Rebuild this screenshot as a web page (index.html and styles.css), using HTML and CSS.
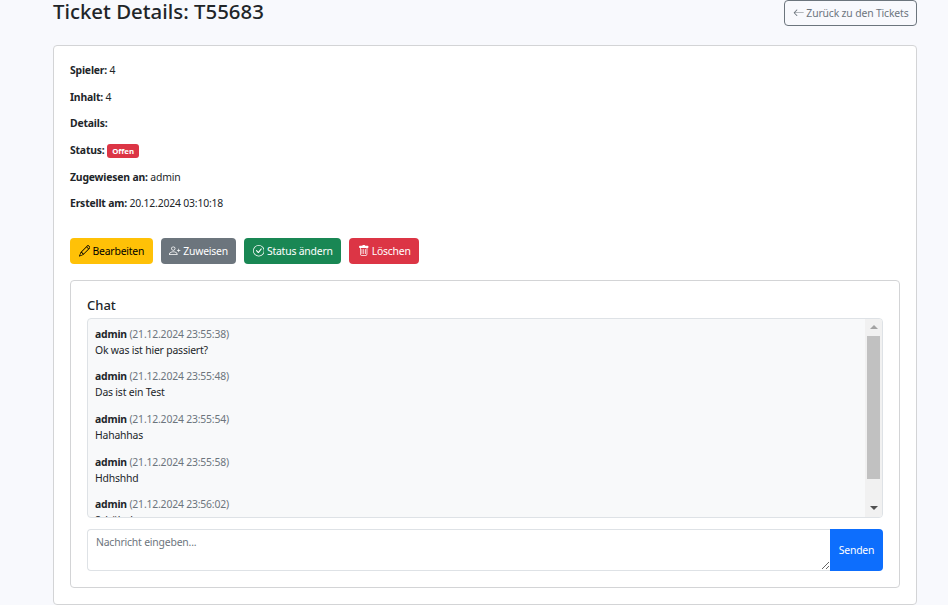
FILE: index.html
```html
<!DOCTYPE html>
<html lang="de">
<head>
<meta charset="utf-8">
<title>Ticket Details</title>
<link rel="stylesheet" href="styles.css">
</head>
<body>
<main class="page">
  <header class="head">
    <h1 class="title">Ticket Details: T55683</h1>
    <a class="back" href="#"><svg class="icon" viewBox="0 0 16 16"><path d="M15 8a.5.5 0 0 0-.5-.5H2.707l3.147-3.146a.5.5 0 1 0-.708-.708l-4 4a.5.5 0 0 0 0 .708l4 4a.5.5 0 0 0 .708-.708L2.707 8.5H14.5A.5.5 0 0 0 15 8z"/></svg> Zurück zu den Tickets</a>
  </header>
  <section class="card">
    <p class="row"><b>Spieler:</b> 4</p>
    <p class="row"><b>Inhalt:</b> 4</p>
    <p class="row"><b>Details:</b></p>
    <p class="row"><b>Status:</b> <span class="badge">Offen</span></p>
    <p class="row"><b>Zugewiesen an:</b> admin</p>
    <p class="row"><b>Erstellt am:</b> 20.12.2024 03:10:18</p>
    <div class="actions">
      <button class="btn warn"><svg class="icon" viewBox="0 0 16 16"><path d="M12.146.146a.5.5 0 0 1 .708 0l3 3a.5.5 0 0 1 0 .708l-10 10a.5.5 0 0 1-.168.11l-5 2a.5.5 0 0 1-.65-.65l2-5a.5.5 0 0 1 .11-.168l10-10zM11.207 2.5 13.5 4.793 14.793 3.5 12.5 1.207 11.207 2.5zm1.586 3L10.5 3.207 4 9.707V10h.5a.5.5 0 0 1 .5.5v.5h.5a.5.5 0 0 1 .5.5v.5h.293l6.5-6.5zm-9.761 5.175-.106.106-1.528 3.821 3.821-1.528.106-.106A.5.5 0 0 1 5 12.5V12h-.5a.5.5 0 0 1-.5-.5V11h-.5a.5.5 0 0 1-.468-.325z"/></svg> Bearbeiten</button>
      <button class="btn grey"><svg class="icon" viewBox="0 0 16 16"><path d="M6 8a3 3 0 1 0 0-6 3 3 0 0 0 0 6zm2-3a2 2 0 1 1-4 0 2 2 0 0 1 4 0zm4 8c0 1-1 1-1 1H1s-1 0-1-1 1-4 6-4 6 3 6 4zm-1-.004c-.001-.246-.154-.986-.832-1.664C9.516 10.68 8.289 10 6 10c-2.29 0-3.516.68-4.168 1.332-.678.678-.83 1.418-.832 1.664h10z"/><path d="M13.5 5a.5.5 0 0 1 .5.5V7h1.5a.5.5 0 0 1 0 1H14v1.5a.5.5 0 0 1-1 0V8h-1.5a.5.5 0 0 1 0-1H13V5.5a.5.5 0 0 1 .5-.5z"/></svg> Zuweisen</button>
      <button class="btn green"><svg class="icon" viewBox="0 0 16 16"><path d="M8 15A7 7 0 1 1 8 1a7 7 0 0 1 0 14zm0 1A8 8 0 1 0 8 0a8 8 0 0 0 0 16z"/><path d="M10.97 4.97a.235.235 0 0 0-.02.022L7.477 9.417 5.384 7.323a.75.75 0 0 0-1.06 1.06L6.97 11.03a.75.75 0 0 0 1.079-.02l3.992-4.99a.75.75 0 0 0-1.071-1.05z"/></svg> Status ändern</button>
      <button class="btn red"><svg class="icon" viewBox="0 0 16 16"><path d="M5.5 5.5A.5.5 0 0 1 6 6v6a.5.5 0 0 1-1 0V6a.5.5 0 0 1 .5-.5zm2.5 0a.5.5 0 0 1 .5.5v6a.5.5 0 0 1-1 0V6a.5.5 0 0 1 .5-.5zm3 .5a.5.5 0 0 0-1 0v6a.5.5 0 0 0 1 0V6z"/><path d="M14.5 3a1 1 0 0 1-1 1H13v9a2 2 0 0 1-2 2H5a2 2 0 0 1-2-2V4h-.5a1 1 0 0 1-1-1V2a1 1 0 0 1 1-1H6a1 1 0 0 1 1-1h2a1 1 0 0 1 1 1h3.5a1 1 0 0 1 1 1v1zM4.118 4 4 4.059V13a1 1 0 0 0 1 1h6a1 1 0 0 0 1-1V4.059L11.882 4H4.118zM2.5 3V2h11v1h-11z"/></svg> Löschen</button>
    </div>
    <section class="chat">
      <h2 class="chat-title">Chat</h2>
      <div class="log">
        <div class="messages">
          <div class="msg"><b>admin</b> <span class="time">(21.12.2024 23:55:38)</span><br>Ok was ist hier passiert?</div>
          <div class="msg"><b>admin</b> <span class="time">(21.12.2024 23:55:48)</span><br>Das ist ein Test</div>
          <div class="msg"><b>admin</b> <span class="time">(21.12.2024 23:55:54)</span><br>Hahahhas</div>
          <div class="msg"><b>admin</b> <span class="time">(21.12.2024 23:55:58)</span><br>Hdhshhd</div>
          <div class="msg"><b>admin</b> <span class="time">(21.12.2024 23:56:02)</span><br>Schöhnhs</div>
        </div>
        <div class="scrollbar">
          <span class="arrow-btn"><span class="arrow-up"></span></span>
          <span class="thumb"></span>
          <span class="arrow-btn"><span class="arrow-down"></span></span>
        </div>
      </div>
      <form class="send">
        <textarea class="input" placeholder="Nachricht eingeben..."></textarea>
        <button class="submit" type="button">Senden</button>
      </form>
    </section>
  </section>
</main>
</body>
</html>
```
FILE: styles.css
```css
* { box-sizing: border-box; }
html { background: #fff; height: 100%; overflow: hidden; }
body {
  margin: 0;
  height: 605px;
  overflow: hidden;
  background: #f8f9fd;
  color: #212529;
  font-family: "Noto Sans", "Open Sans", sans-serif;
  font-size: 10.4px;
  letter-spacing: -0.18px;
  line-height: 16.5px;
}
.page { padding: 0 31px 0 53px; }
.head { display: flex; justify-content: space-between; align-items: flex-start; height: 45px; }
.title { margin: 0; font-size: 20.4px; line-height: 22px; font-weight: 500; letter-spacing: 0; }
.back {
  height: 26px;
  padding: 0 7.5px;
  display: flex;
  align-items: center;
  gap: 2px;
  border: 1px solid #6c757d;
  border-radius: 4px;
  color: #6c757d;
  letter-spacing: -0.15px;
  text-decoration: none;
  white-space: nowrap;
}
.icon { width: 11.5px; height: 11.5px; fill: currentColor; flex: none; vertical-align: -2px; }
.card {
  background: #fff;
  border: 1px solid #d3d4d6;
  border-radius: 4px;
  padding: 16px;
  height: 560px;
}
.row { margin: 0 0 10.2px; height: 16.5px; }
.row b { font-weight: 700; }
.badge {
  display: inline-block;
  background: #dc3545;
  color: #fff;
  font-size: 7.8px;
  font-weight: 700;
  line-height: 8px;
  padding: 3px 5px;
  border-radius: 3px;
  letter-spacing: 0;
}
.actions { display: flex; gap: 8px; margin-top: 26px; }
.btn {
  height: 26px;
  padding: 0 7.5px;
  border: 1px solid transparent;
  border-radius: 4px;
  font: inherit;
  letter-spacing: -0.2px;
  white-space: nowrap;
}
.warn { background: #ffc107; color: #000; }
.grey { background: #6c757d; color: #fff; }
.green { background: #198754; color: #fff; }
.red { background: #dc3545; color: #fff; }
.chat {
  margin-top: 16px;
  border: 1px solid #d3d4d6;
  border-radius: 4px;
  padding: 16px;
  height: 308px;
}
.chat-title { margin: 0 0 5px; font-size: 13px; line-height: 16px; font-weight: 500; letter-spacing: 0; }
.log {
  display: flex;
  height: 200px;
  background: #f8f9fa;
  border: 1px solid #dee2e6;
  border-radius: 4px;
  overflow: hidden;
}
.messages { flex: 1; min-width: 0; padding: 6.95px 7px 0; overflow: hidden; line-height: 16px; }
.msg { margin-bottom: 10.55px; height: 32px; }
.msg b { font-weight: 700; }
.time { color: #6c757d; }
.scrollbar {
  width: 17px;
  flex: none;
  display: flex;
  flex-direction: column;
  align-items: center;
  justify-content: space-between;
  background: #f1f1f1;
}
.arrow-btn { height: 17px; width: 17px; display: flex; align-items: center; justify-content: center; }
.arrow-up { border: 4px solid transparent; border-top: 0; border-bottom: 4px solid #a3a3a3; }
.arrow-down { border: 4px solid transparent; border-bottom: 0; border-top: 4px solid #505050; }
.thumb { width: 13px; height: 143px; margin-bottom: auto; background: #c1c1c1; }
.send { display: flex; margin-top: 11px; height: 42px; }
.input {
  flex: 1;
  min-width: 0;
  height: 42px;
  padding: 4px 8px;
  border: 1px solid #dee2e6;
  border-right: 0;
  border-radius: 4px 0 0 4px;
  font: inherit;
  letter-spacing: inherit;
  color: #212529;
  background: #fff;
  outline: 0;
}
.input::placeholder { color: #6c757d; opacity: 1; }
.submit {
  width: 53px;
  border: 0;
  background: #0d6efd;
  color: #fff;
  border-radius: 0 4px 4px 0;
  font: inherit;
  letter-spacing: inherit;
}
```
